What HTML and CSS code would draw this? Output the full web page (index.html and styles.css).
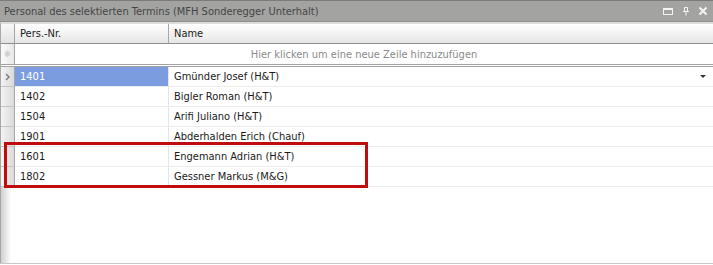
FILE: index.html
```html
<!DOCTYPE html>
<html lang="de">
<head>
    <meta charset="UTF-8">
    <title>Personal des selektierten Termins</title>
    <link rel="stylesheet" href="styles.css">
</head>
<body>
    <div class="panel">
        <div class="caption">
            <span class="caption-text">Personal des selektierten Termins (MFH Sonderegger Unterhalt)</span>
            <div class="caption-buttons">
                <svg width="12" height="10" viewBox="0 0 12 10"><rect x="1.5" y="2.5" width="9" height="6" fill="none" stroke="#f4f4f4" stroke-width="1"/><rect x="1" y="2" width="10" height="2" fill="#f4f4f4"/></svg>
                <svg width="10" height="10" viewBox="0 0 10 10"><path d="M3.5 1.5h3v4h-3z M2 5.5h6 M5 5.5v4" fill="none" stroke="#f4f4f4" stroke-width="1"/></svg>
                <svg width="10" height="10" viewBox="0 0 10 10"><path d="M1.5 1.5l7 7 M8.5 1.5l-7 7" stroke="#f4f4f4" stroke-width="2"/></svg>
            </div>
        </div>
        <div class="grid">
            <div class="row head">
                <div class="ind"></div>
                <div class="cell nr">Pers.-Nr.</div>
                <div class="cell name">Name</div>
            </div>
            <div class="row newrow">
                <div class="ind"><span class="star">&#x274B;</span></div>
                <div class="cell hint">Hier klicken um eine neue Zeile hinzuzufügen</div>
            </div>
            <div class="row data current">
                <div class="ind"><svg width="6" height="8" viewBox="0 0 6 8"><path d="M1 1l3 3-3 3" fill="none" stroke="#7a7a7a" stroke-width="1.4"/></svg></div>
                <div class="cell nr selected">1401</div>
                <div class="cell name">Gmünder Josef (H&amp;T)<span class="drop"></span></div>
            </div>
            <div class="row data">
                <div class="ind"></div>
                <div class="cell nr">1402</div>
                <div class="cell name">Bigler Roman (H&amp;T)</div>
            </div>
            <div class="row data">
                <div class="ind"></div>
                <div class="cell nr">1504</div>
                <div class="cell name">Arifi Juliano (H&amp;T)</div>
            </div>
            <div class="row data">
                <div class="ind"></div>
                <div class="cell nr">1901</div>
                <div class="cell name">Abderhalden Erich (Chauf)</div>
            </div>
            <div class="marked">
                <div class="row data">
                    <div class="ind"></div>
                    <div class="cell nr">1601</div>
                    <div class="cell name">Engemann Adrian (H&amp;T)</div>
                </div>
                <div class="row data">
                    <div class="ind"></div>
                    <div class="cell nr">1802</div>
                    <div class="cell name">Gessner Markus (M&amp;G)</div>
                </div>
                <div class="frame"></div>
            </div>
            <div class="empty"></div>
        </div>
    </div>
</body>
</html>
```

FILE: styles.css
```css
body { margin: 0; width: 713px; height: 265px; overflow: hidden; background: #fff; font-family: "DejaVu Sans Condensed", "DejaVu Sans", sans-serif; font-size: 11px; color: #1a1a1a; }
.panel { height: 264px; display: flex; flex-direction: column; border-bottom: 1px solid #c8c8c8; box-sizing: border-box; }
.caption { height: 20px; display: flex; align-items: center; justify-content: space-between; background: #a3a3a1; border-top: 1px solid #7c7c7c; border-bottom: 1px solid #8e8e8e; padding: 0 5px 0 4px; color: #454545; font-size: 11px; }
.caption-buttons { display: flex; gap: 7px; align-items: center; }
.grid { flex: 1; display: flex; flex-direction: column; border-top: 2px solid #dcdcdc; border-left: 1px solid #a8a8a8; }
.row { display: flex; height: 20px; box-sizing: border-box; }
.ind { width: 14px; flex: none; display: flex; align-items: center; justify-content: center; background: linear-gradient(to right, #f4f4f4, #dadada); border-right: 1px solid #a5a5a5; border-bottom: 1px solid #c4c4c4; box-sizing: border-box; }
.cell { display: flex; align-items: center; padding-left: 5px; box-sizing: border-box; white-space: nowrap; }
.nr { width: 154px; flex: none; border-right: 1px solid #e4e4e4; }
.name { flex: 1; position: relative; }
.head { background: linear-gradient(#ffffff, #e6e6e6); border-bottom: 1px solid #8f8f8f; }
.head .ind { background: linear-gradient(#f8f8f8, #e2e2e2); border-bottom: none; }
.head .nr { border-right: 1px solid #a8a8a8; }
.newrow { height: 23px; border-bottom: 3px double #a4a4a4; }
.newrow .ind { border-bottom: none; background: linear-gradient(to right, #fafafa, #e8e8e8); }
.star { color: #c8c8c8; font-size: 9px; }
.hint { flex: 1; justify-content: center; color: #8a8a8a; padding-left: 0; }
.data { border-bottom: 1px solid #ececec; }
.data .ind { margin-bottom: -1px; height: 20px; }
.selected { background: #7b9de0; color: #fff; }
.drop { position: absolute; right: 7px; top: 8px; width: 0; height: 0; border-left: 3px solid transparent; border-right: 3px solid transparent; border-top: 3px solid #333; }
.marked { position: relative; }
.frame { position: absolute; left: 3px; top: -5px; width: 364px; height: 46px; border: 3px solid #c00c0c; box-sizing: border-box; }
.empty { flex: 1; background: linear-gradient(to right, #d0d0d0, #ffffff 10px); }
```
